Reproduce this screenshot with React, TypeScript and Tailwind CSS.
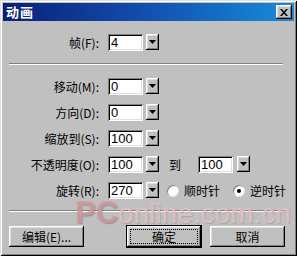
import React from "react";

const raised =
  "shadow-[inset_-1px_-1px_0_#000,inset_1px_1px_0_#fff,inset_-2px_-2px_0_#808080,inset_2px_2px_0_#dfdfdf]";
const sunken =
  "shadow-[inset_1px_1px_0_#808080,inset_-1px_-1px_0_#fff,inset_2px_2px_0_#000,inset_-2px_-2px_0_#dfdfdf]";

function Field({ value, w = 35 }: { value: string; w?: number }) {
  return (
    <div
      className={`h-[17px] w-[35px] bg-white ${sunken} pl-[3px] pt-[1px] text-[13px] leading-[15px] text-black`}
      style={{ fontFamily: '"Liberation Sans", Arial, sans-serif', width: w }}
    >
      {value}
    </div>
  );
}

function Drop() {
  return (
    <div className={`flex h-[16px] w-[13px] items-center justify-center bg-[#c0c0c0] ${raised}`}>
      <svg width="7" height="4" viewBox="0 0 7 4">
        <polygon points="0,0 7,0 3.5,4" fill="#000" />
      </svg>
    </div>
  );
}

function Label({ children }: { children: React.ReactNode }) {
  return <div className="w-[99px] shrink-0 text-right whitespace-nowrap">{children}</div>;
}

function Row({ label, value, children }: { label: string; value: string; children?: React.ReactNode }) {
  return (
    <div className="flex h-[17px] items-center">
      <Label>{label}</Label>
      <div className="ml-[9px]">
        <Field value={value} />
      </div>
      <div className="ml-[3px] self-start">
        <Drop />
      </div>
      {children}
    </div>
  );
}

function Radio({ checked }: { checked?: boolean }) {
  return (
    <div className="relative h-[12px] w-[12px] rounded-full bg-white shadow-[inset_1px_1px_0_#808080,inset_-1px_-1px_0_#dfdfdf]">
      {checked && <div className="absolute left-[4px] top-[4px] h-[4px] w-[4px] rounded-full bg-black" />}
    </div>
  );
}

function Sep() {
  return (
    <div className="ml-[9px] w-[274px]">
      <div className="h-px bg-[#808080]" />
      <div className="h-px bg-white" />
    </div>
  );
}

export default function App() {
  return (
    <div
      className="relative h-[256px] w-[297px] overflow-hidden bg-[#c0c0c0] text-[12px] leading-[14px] text-black shadow-[inset_1px_1px_0_#dfdfdf,inset_-1px_-1px_0_#000,inset_2px_2px_0_#fff,inset_-2px_-2px_0_#808080]"
      style={{ fontFamily: '"Noto Sans CJK SC", "Liberation Sans", sans-serif' }}
    >
      {/* Title bar */}
      <div className="mx-[3px] mt-[3px] flex h-[18px] items-center justify-between bg-gradient-to-r from-[#0a1f78] via-[#1350b0] to-[#1a8cd8] pl-[3px] pr-[2px]">
        <div className="text-[13px] font-bold tracking-[1px] text-white">动画</div>
        <div className={`flex h-[14px] w-[16px] items-center justify-center bg-[#c0c0c0] ${raised}`}>
          <svg width="8" height="7" viewBox="0 0 8 7">
            <path d="M0 0 L2 0 L4 2.5 L6 0 L8 0 L5 3.5 L8 7 L6 7 L4 4.5 L2 7 L0 7 L3 3.5 Z" fill="#000" />
          </svg>
        </div>
      </div>

      {/* Frame row */}
      <div className="mt-[13px]">
        <Row label="帧(F):" value="4" />
      </div>

      <div className="mt-[12px]">
        <Sep />
      </div>

      <div className="mt-[13px] flex flex-col gap-[9px]">
        <Row label="移动(M):" value="0" />
        <Row label="方向(D):" value="0" />
        <Row label="缩放到(S):" value="100" />
        <Row label="不透明度(O):" value="100">
          <div className="ml-[10px]">到</div>
          <div className="ml-[17px]">
            <Field value="100" />
          </div>
          <div className="ml-[4px] self-start">
            <Drop />
          </div>
        </Row>
        <Row label="旋转(R):" value="270">
          <div className="ml-[8px]">
            <Radio />
          </div>
          <div className="ml-[5px]">顺时针</div>
          <div className="ml-[13px]">
            <Radio checked />
          </div>
          <div className="ml-[5px]">逆时针</div>
        </Row>
      </div>

      <div className="mt-[11px]">
        <Sep />
      </div>

      {/* Buttons */}
      <div className="mt-[13px] flex h-[23px] items-center">
        <div className={`ml-[9px] flex h-[21px] w-[75px] items-center justify-center bg-[#c0c0c0] ${raised}`}>
          编辑(E)...
        </div>
        <div className="ml-[42px] h-[23px] w-[76px] border border-black bg-[#c0c0c0]">
          <div className={`flex h-full w-full items-center justify-center p-[3px] ${raised}`}>
            <div className="flex h-full w-full items-center justify-center border border-dotted border-black">
              确定
            </div>
          </div>
        </div>
        <div className={`ml-[8px] flex h-[21px] w-[75px] items-center justify-center bg-[#c0c0c0] ${raised}`}>
          取消
        </div>
      </div>

      {/* Watermark */}
      <div
        className="pointer-events-none absolute left-[75px] top-[197px] flex items-baseline whitespace-nowrap"
        style={{ fontFamily: '"Liberation Sans", Arial, sans-serif' }}
      >
        <span className="text-[31px] font-bold leading-none text-[#d99aa3]/80 [text-shadow:1px_1px_1px_rgba(90,90,90,0.45)]">
          PC
        </span>
        <span className="text-[28px] leading-none text-[#e9c4c9]/80 [text-shadow:1px_1px_1px_rgba(120,120,120,0.35)]">
          online.com.cn
        </span>
      </div>
    </div>
  );
}
